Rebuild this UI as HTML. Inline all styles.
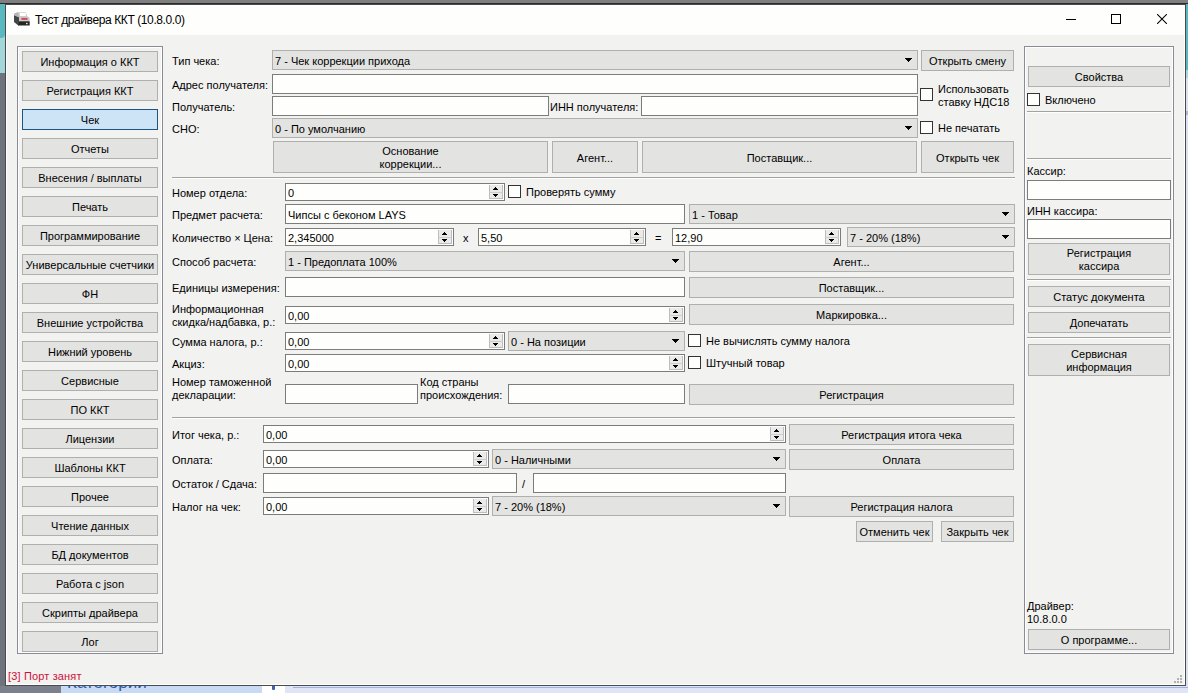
<!DOCTYPE html>
<html><head><meta charset="utf-8"><style>
*{margin:0;padding:0}
html,body{width:1188px;height:693px;overflow:hidden;background:#7b808c;position:relative}
body{font-family:"Liberation Sans",sans-serif;font-size:11px;color:#000;-webkit-text-stroke:0}
div,svg{position:absolute}
.lbl{white-space:pre;line-height:13px}
.btn{box-sizing:border-box;border:1px solid #afafad;background:#e3e3e1;display:flex;align-items:center;justify-content:center;text-align:center;line-height:13px}
.btn.sel{border-color:#1b5585;background:#cde4f6}
.btn span{display:block;white-space:pre;position:relative;top:1px}
.edit{box-sizing:border-box;border:1px solid #7c7c7a;background:#fefefc}
.edit span,.combo span{position:absolute;left:2px;line-height:13px;white-space:pre}
.combo{box-sizing:border-box;border:1px solid #afafad;background:#e3e3e1}
.combo i{position:absolute;right:6px;top:50%;margin-top:-2px;width:0;height:0;border-left:3.5px solid transparent;border-right:3.5px solid transparent;border-top:4px solid #000}
.chk{box-sizing:border-box;border:1px solid #333;background:#fefefc}
.hsep{box-sizing:border-box;border-top:1px solid #a2a2a0;border-bottom:1px solid #fefefc}
.grp{box-sizing:border-box;border:1px solid #8a8a98;box-shadow:inset 0 0 0 1px #fefefc}
.sp{width:13px;background:#f0f0f0}
.su,.sd{position:absolute;left:0;width:13px;box-sizing:border-box;border:1px solid #cfcfcf;background:#ececec}
.title{left:35px;top:13px;font-size:12px;line-height:15px;white-space:pre;letter-spacing:-0.4px;-webkit-text-stroke:0}
.ticon{left:14px;top:12px;width:16px;height:14px}
</style></head><body>
<div style="position:absolute;left:0;top:0;width:1188px;height:3px;background:#7f7f7f"></div>
<div style="position:absolute;left:0;top:3px;width:1188px;height:1px;background:#2b2b2b"></div>
<div style="position:absolute;left:0;top:4px;width:5px;height:682px;background:#6e737e"></div>
<div style="position:absolute;left:0;top:4px;width:5px;height:69px;background:#a3d6d9"></div>
<div style="position:absolute;left:0;top:4px;width:5px;height:34px;background:#5ab9bf;border-bottom-right-radius:4px"></div>
<div style="position:absolute;left:1186px;top:4px;width:2px;height:682px;background:#d9e1f2"></div>
<div style="position:absolute;left:1186px;top:4px;width:2px;height:66px;background:#5ab9bf"></div>
<div style="position:absolute;left:1186px;top:70px;width:2px;height:8px;background:#a9d8dc"></div>
<div style="position:absolute;left:1186px;top:111px;width:2px;height:4px;background:#aab8d6"></div>
<div style="position:absolute;left:5px;top:4px;width:1181px;height:682px;background:#4a4a4f"></div>
<div style="position:absolute;left:6px;top:5px;width:1179px;height:30px;background:#fefefc"></div>
<div style="position:absolute;left:6px;top:35px;width:1179px;height:650px;background:#fefefc"></div>
<div style="position:absolute;left:7px;top:35px;width:1177px;height:649px;background:#f2f2f0"></div>
<div style="position:absolute;left:0;top:686px;width:1188px;height:7px;background:#dfe5f6"></div>
<div style="position:absolute;left:0;top:686px;width:61px;height:7px;background:#7b808c"></div>
<div style="position:absolute;left:61px;top:686px;width:201px;height:7px;background:#c9daf4"></div>
<div style="position:absolute;left:262px;top:686px;width:23px;height:7px;background:#fff"></div>
<div style="position:absolute;left:272px;top:686px;width:3px;height:4px;background:#3a64b0;border-radius:0 0 1px 1px"></div>
<div style="position:absolute;left:293px;top:687px;width:895px;height:1px;background:#9fb4d8"></div>
<div style="position:absolute;left:67px;top:686px;height:7px;width:190px;overflow:hidden"><div style="position:absolute;left:0;top:-13px;font:17px 'Liberation Sans',sans-serif;color:#2c5aa8;line-height:19px;-webkit-text-stroke:0">Категории</div></div>
<svg style="position:absolute;left:14px;top:12px" width="16" height="14" viewBox="0 0 16 14"><path d="M0.3 1.5L4 0.3L11.5 0L13.5 4.5L15.6 5.5L15.7 9.3L5 9.3L0.3 5Z" fill="#cacaca"/><path d="M0 3L5 5.3V13.6H4.3L0 10Z" fill="#454545"/><path d="M5 9.3H15.7V13.6H4.3Z" fill="#252525"/><path d="M0.3 1.5L4 0.3L5 5.3L0.3 3.5Z" fill="#b4b4b4"/><rect x="5.8" y="0.8" width="6" height="3.2" fill="#fff"/><rect x="7.1" y="5.8" width="6.7" height="2.2" fill="#e48a96"/><rect x="7.6" y="6.3" width="5.6" height="1.2" fill="#c42a48"/><rect x="12" y="10.9" width="1.6" height="1.3" fill="#e8e8e8"/></svg>
<div class="title">Тест драйвера ККТ (10.8.0.0)</div>
<div style="position:absolute;left:1066px;top:19px;width:10px;height:1px;background:#000"></div>
<div style="position:absolute;left:1111px;top:14px;width:10px;height:10px;border:1px solid #000;box-sizing:border-box"></div>
<svg style="position:absolute;left:1157px;top:14px" width="10" height="10" viewBox="0 0 10 10"><path d="M0 0L10 10M10 0L0 10" stroke="#000" stroke-width="1.05"/></svg>
<div class="grp" style="left:17px;top:46px;width:146px;height:608px;"></div>
<div class="btn" style="left:22px;top:51px;width:136px;height:21px"><span>Информация о ККТ</span></div>
<div class="btn" style="left:22px;top:80px;width:136px;height:21px"><span>Регистрация ККТ</span></div>
<div class="btn sel" style="left:22px;top:109px;width:136px;height:21px"><span>Чек</span></div>
<div class="btn" style="left:22px;top:138px;width:136px;height:21px"><span>Отчеты</span></div>
<div class="btn" style="left:22px;top:167px;width:136px;height:21px"><span>Внесения / выплаты</span></div>
<div class="btn" style="left:22px;top:196px;width:136px;height:21px"><span>Печать</span></div>
<div class="btn" style="left:22px;top:225px;width:136px;height:21px"><span>Программирование</span></div>
<div class="btn" style="left:22px;top:254px;width:136px;height:21px"><span>Универсальные счетчики</span></div>
<div class="btn" style="left:22px;top:283px;width:136px;height:21px"><span>ФН</span></div>
<div class="btn" style="left:22px;top:312px;width:136px;height:21px"><span>Внешние устройства</span></div>
<div class="btn" style="left:22px;top:341px;width:136px;height:21px"><span>Нижний уровень</span></div>
<div class="btn" style="left:22px;top:370px;width:136px;height:21px"><span>Сервисные</span></div>
<div class="btn" style="left:22px;top:399px;width:136px;height:21px"><span>ПО ККТ</span></div>
<div class="btn" style="left:22px;top:428px;width:136px;height:21px"><span>Лицензии</span></div>
<div class="btn" style="left:22px;top:457px;width:136px;height:21px"><span>Шаблоны ККТ</span></div>
<div class="btn" style="left:22px;top:486px;width:136px;height:21px"><span>Прочее</span></div>
<div class="btn" style="left:22px;top:515px;width:136px;height:21px"><span>Чтение данных</span></div>
<div class="btn" style="left:22px;top:544px;width:136px;height:21px"><span>БД документов</span></div>
<div class="btn" style="left:22px;top:573px;width:136px;height:21px"><span>Работа с json</span></div>
<div class="btn" style="left:22px;top:602px;width:136px;height:21px"><span>Скрипты драйвера</span></div>
<div class="btn" style="left:22px;top:631px;width:136px;height:21px"><span>Лог</span></div>
<div class="lbl" style="left:172px;top:55px;">Тип чека:</div>
<div class="combo" style="left:272px;top:50px;width:646px;height:20px"><span style="top:4px">7 - Чек коррекции прихода</span><svg style="right:5px;top:7px" width="7" height="4"><path d="M0 0h7v1h-1v1h-1v1h-1v1h-1v-1h-1v-1h-1v-1h-1z"/></svg></div>
<div class="btn" style="left:921px;top:50px;width:93px;height:21px"><span>Открыть смену</span></div>
<div class="lbl" style="left:172px;top:79px;">Адрес получателя:</div>
<div class="edit" style="left:272px;top:74px;width:646px;height:20px"><span style="top:4px"></span></div>
<div class="chk" style="left:920px;top:88px;width:13px;height:13px;"></div>
<div class="lbl" style="left:938px;top:83px;">Использовать<br>ставку НДС18</div>
<div class="lbl" style="left:172px;top:101px;">Получатель:</div>
<div class="edit" style="left:272px;top:96px;width:277px;height:20px"><span style="top:4px"></span></div>
<div class="lbl" style="left:550px;top:101px;">ИНН получателя:</div>
<div class="edit" style="left:641px;top:96px;width:277px;height:20px"><span style="top:4px"></span></div>
<div class="lbl" style="left:172px;top:123px;">СНО:</div>
<div class="combo" style="left:272px;top:118px;width:646px;height:20px"><span style="top:4px">0 - По умолчанию</span><svg style="right:5px;top:7px" width="7" height="4"><path d="M0 0h7v1h-1v1h-1v1h-1v1h-1v-1h-1v-1h-1v-1h-1z"/></svg></div>
<div class="chk" style="left:920px;top:121px;width:13px;height:13px;"></div>
<div class="lbl" style="left:938px;top:122px;">Не печатать</div>
<div class="btn" style="left:273px;top:141px;width:275px;height:32px"><span>Основание<br>коррекции...</span></div>
<div class="btn" style="left:552px;top:141px;width:86px;height:32px"><span>Агент...</span></div>
<div class="btn" style="left:642px;top:141px;width:275px;height:32px"><span>Поставщик...</span></div>
<div class="btn" style="left:921px;top:141px;width:93px;height:32px"><span>Открыть чек</span></div>
<div class="hsep" style="left:172px;top:177px;width:843px;height:2px;"></div>
<div class="lbl" style="left:172px;top:187px;">Номер отдела:</div>
<div class="edit" style="left:285px;top:183px;width:220px;height:18px"><span style="top:3px">0</span><svg style="position:absolute;right:1px;top:1px" width="14" height="14" viewBox="0 0 14 14"><rect x="0" y="0" width="14" height="14" fill="#bdbdbd"/><rect x="1" y="0" width="12" height="13" fill="#eaeaea"/><line x1="0.5" y1="7.5" x2="13.5" y2="7.5" stroke="#cdcdcd"/><path d="M6 2h1v1h1v1h1v1H4V4h1V3h1z" fill="#000"/><path d="M4 9h5v1H8v1H7v1H6v-1H5v-1H4z" fill="#000"/></svg></div>
<div class="chk" style="left:508px;top:185px;width:13px;height:13px;"></div>
<div class="lbl" style="left:526px;top:186px;">Проверять сумму</div>
<div class="lbl" style="left:172px;top:209px;">Предмет расчета:</div>
<div class="edit" style="left:285px;top:204px;width:400px;height:20px"><span style="top:4px">Чипсы с беконом LAYS</span></div>
<div class="combo" style="left:689px;top:204px;width:326px;height:20px"><span style="top:4px">1 - Товар</span><svg style="right:5px;top:7px" width="7" height="4"><path d="M0 0h7v1h-1v1h-1v1h-1v1h-1v-1h-1v-1h-1v-1h-1z"/></svg></div>
<div class="lbl" style="left:172px;top:232px;">Количество × Цена:</div>
<div class="edit" style="left:285px;top:228px;width:169px;height:18px"><span style="top:3px">2,345000</span><svg style="position:absolute;right:1px;top:1px" width="14" height="14" viewBox="0 0 14 14"><rect x="0" y="0" width="14" height="14" fill="#bdbdbd"/><rect x="1" y="0" width="12" height="13" fill="#eaeaea"/><line x1="0.5" y1="7.5" x2="13.5" y2="7.5" stroke="#cdcdcd"/><path d="M6 2h1v1h1v1h1v1H4V4h1V3h1z" fill="#000"/><path d="M4 9h5v1H8v1H7v1H6v-1H5v-1H4z" fill="#000"/></svg></div>
<div class="lbl" style="left:463px;top:232px;">x</div>
<div class="edit" style="left:478px;top:228px;width:168px;height:18px"><span style="top:3px">5,50</span><svg style="position:absolute;right:1px;top:1px" width="14" height="14" viewBox="0 0 14 14"><rect x="0" y="0" width="14" height="14" fill="#bdbdbd"/><rect x="1" y="0" width="12" height="13" fill="#eaeaea"/><line x1="0.5" y1="7.5" x2="13.5" y2="7.5" stroke="#cdcdcd"/><path d="M6 2h1v1h1v1h1v1H4V4h1V3h1z" fill="#000"/><path d="M4 9h5v1H8v1H7v1H6v-1H5v-1H4z" fill="#000"/></svg></div>
<div class="lbl" style="left:655px;top:232px;">=</div>
<div class="edit" style="left:672px;top:228px;width:169px;height:18px"><span style="top:3px">12,90</span><svg style="position:absolute;right:1px;top:1px" width="14" height="14" viewBox="0 0 14 14"><rect x="0" y="0" width="14" height="14" fill="#bdbdbd"/><rect x="1" y="0" width="12" height="13" fill="#eaeaea"/><line x1="0.5" y1="7.5" x2="13.5" y2="7.5" stroke="#cdcdcd"/><path d="M6 2h1v1h1v1h1v1H4V4h1V3h1z" fill="#000"/><path d="M4 9h5v1H8v1H7v1H6v-1H5v-1H4z" fill="#000"/></svg></div>
<div class="combo" style="left:847px;top:227px;width:168px;height:20px"><span style="top:4px">7 - 20% (18%)</span><svg style="right:5px;top:7px" width="7" height="4"><path d="M0 0h7v1h-1v1h-1v1h-1v1h-1v-1h-1v-1h-1v-1h-1z"/></svg></div>
<div class="lbl" style="left:172px;top:256px;">Способ расчета:</div>
<div class="combo" style="left:285px;top:251px;width:400px;height:20px"><span style="top:4px">1 - Предоплата 100%</span><svg style="right:5px;top:7px" width="7" height="4"><path d="M0 0h7v1h-1v1h-1v1h-1v1h-1v-1h-1v-1h-1v-1h-1z"/></svg></div>
<div class="btn" style="left:689px;top:251px;width:325px;height:21px"><span>Агент...</span></div>
<div class="lbl" style="left:172px;top:282px;">Единицы измерения:</div>
<div class="edit" style="left:285px;top:277px;width:400px;height:20px"><span style="top:4px"></span></div>
<div class="btn" style="left:689px;top:277px;width:325px;height:21px"><span>Поставщик...</span></div>
<div class="lbl" style="left:172px;top:303px;">Информационная<br>скидка/надбавка, р.:</div>
<div class="edit" style="left:285px;top:306px;width:400px;height:18px"><span style="top:3px">0,00</span><svg style="position:absolute;right:1px;top:1px" width="14" height="14" viewBox="0 0 14 14"><rect x="0" y="0" width="14" height="14" fill="#bdbdbd"/><rect x="1" y="0" width="12" height="13" fill="#eaeaea"/><line x1="0.5" y1="7.5" x2="13.5" y2="7.5" stroke="#cdcdcd"/><path d="M6 2h1v1h1v1h1v1H4V4h1V3h1z" fill="#000"/><path d="M4 9h5v1H8v1H7v1H6v-1H5v-1H4z" fill="#000"/></svg></div>
<div class="btn" style="left:689px;top:304px;width:325px;height:21px"><span>Маркировка...</span></div>
<div class="lbl" style="left:172px;top:336px;">Сумма налога, р.:</div>
<div class="edit" style="left:285px;top:332px;width:220px;height:18px"><span style="top:3px">0,00</span><svg style="position:absolute;right:1px;top:1px" width="14" height="14" viewBox="0 0 14 14"><rect x="0" y="0" width="14" height="14" fill="#bdbdbd"/><rect x="1" y="0" width="12" height="13" fill="#eaeaea"/><line x1="0.5" y1="7.5" x2="13.5" y2="7.5" stroke="#cdcdcd"/><path d="M6 2h1v1h1v1h1v1H4V4h1V3h1z" fill="#000"/><path d="M4 9h5v1H8v1H7v1H6v-1H5v-1H4z" fill="#000"/></svg></div>
<div class="combo" style="left:508px;top:331px;width:177px;height:20px"><span style="top:4px">0 - На позиции</span><svg style="right:5px;top:7px" width="7" height="4"><path d="M0 0h7v1h-1v1h-1v1h-1v1h-1v-1h-1v-1h-1v-1h-1z"/></svg></div>
<div class="chk" style="left:688px;top:334px;width:13px;height:13px;"></div>
<div class="lbl" style="left:706px;top:335px;">Не вычислять сумму налога</div>
<div class="lbl" style="left:172px;top:358px;">Акциз:</div>
<div class="edit" style="left:285px;top:354px;width:400px;height:18px"><span style="top:3px">0,00</span><svg style="position:absolute;right:1px;top:1px" width="14" height="14" viewBox="0 0 14 14"><rect x="0" y="0" width="14" height="14" fill="#bdbdbd"/><rect x="1" y="0" width="12" height="13" fill="#eaeaea"/><line x1="0.5" y1="7.5" x2="13.5" y2="7.5" stroke="#cdcdcd"/><path d="M6 2h1v1h1v1h1v1H4V4h1V3h1z" fill="#000"/><path d="M4 9h5v1H8v1H7v1H6v-1H5v-1H4z" fill="#000"/></svg></div>
<div class="chk" style="left:688px;top:356px;width:13px;height:13px;"></div>
<div class="lbl" style="left:706px;top:357px;">Штучный товар</div>
<div class="lbl" style="left:172px;top:376px;">Номер таможенной<br>декларации:</div>
<div class="edit" style="left:285px;top:384px;width:133px;height:20px"><span style="top:4px"></span></div>
<div class="lbl" style="left:420px;top:376px;">Код страны<br>происхождения:</div>
<div class="edit" style="left:508px;top:384px;width:177px;height:20px"><span style="top:4px"></span></div>
<div class="btn" style="left:689px;top:384px;width:325px;height:21px"><span>Регистрация</span></div>
<div class="hsep" style="left:172px;top:417px;width:843px;height:2px;"></div>
<div class="lbl" style="left:172px;top:429px;">Итог чека, р.:</div>
<div class="edit" style="left:263px;top:425px;width:523px;height:18px"><span style="top:3px">0,00</span><svg style="position:absolute;right:1px;top:1px" width="14" height="14" viewBox="0 0 14 14"><rect x="0" y="0" width="14" height="14" fill="#bdbdbd"/><rect x="1" y="0" width="12" height="13" fill="#eaeaea"/><line x1="0.5" y1="7.5" x2="13.5" y2="7.5" stroke="#cdcdcd"/><path d="M6 2h1v1h1v1h1v1H4V4h1V3h1z" fill="#000"/><path d="M4 9h5v1H8v1H7v1H6v-1H5v-1H4z" fill="#000"/></svg></div>
<div class="btn" style="left:789px;top:424px;width:225px;height:21px"><span>Регистрация итога чека</span></div>
<div class="lbl" style="left:172px;top:454px;">Оплата:</div>
<div class="edit" style="left:263px;top:450px;width:226px;height:18px"><span style="top:3px">0,00</span><svg style="position:absolute;right:1px;top:1px" width="14" height="14" viewBox="0 0 14 14"><rect x="0" y="0" width="14" height="14" fill="#bdbdbd"/><rect x="1" y="0" width="12" height="13" fill="#eaeaea"/><line x1="0.5" y1="7.5" x2="13.5" y2="7.5" stroke="#cdcdcd"/><path d="M6 2h1v1h1v1h1v1H4V4h1V3h1z" fill="#000"/><path d="M4 9h5v1H8v1H7v1H6v-1H5v-1H4z" fill="#000"/></svg></div>
<div class="combo" style="left:492px;top:449px;width:294px;height:20px"><span style="top:4px">0 - Наличными</span><svg style="right:5px;top:7px" width="7" height="4"><path d="M0 0h7v1h-1v1h-1v1h-1v1h-1v-1h-1v-1h-1v-1h-1z"/></svg></div>
<div class="btn" style="left:789px;top:449px;width:225px;height:21px"><span>Оплата</span></div>
<div class="lbl" style="left:172px;top:478px;">Остаток / Сдача:</div>
<div class="edit" style="left:263px;top:473px;width:254px;height:20px"><span style="top:4px"></span></div>
<div class="lbl" style="left:522px;top:478px;">/</div>
<div class="edit" style="left:533px;top:473px;width:253px;height:20px"><span style="top:4px"></span></div>
<div class="lbl" style="left:172px;top:501px;">Налог на чек:</div>
<div class="edit" style="left:263px;top:497px;width:226px;height:18px"><span style="top:3px">0,00</span><svg style="position:absolute;right:1px;top:1px" width="14" height="14" viewBox="0 0 14 14"><rect x="0" y="0" width="14" height="14" fill="#bdbdbd"/><rect x="1" y="0" width="12" height="13" fill="#eaeaea"/><line x1="0.5" y1="7.5" x2="13.5" y2="7.5" stroke="#cdcdcd"/><path d="M6 2h1v1h1v1h1v1H4V4h1V3h1z" fill="#000"/><path d="M4 9h5v1H8v1H7v1H6v-1H5v-1H4z" fill="#000"/></svg></div>
<div class="combo" style="left:492px;top:496px;width:294px;height:20px"><span style="top:4px">7 - 20% (18%)</span><svg style="right:5px;top:7px" width="7" height="4"><path d="M0 0h7v1h-1v1h-1v1h-1v1h-1v-1h-1v-1h-1v-1h-1z"/></svg></div>
<div class="btn" style="left:789px;top:496px;width:225px;height:21px"><span>Регистрация налога</span></div>
<div class="btn" style="left:856px;top:521px;width:77px;height:21px"><span>Отменить чек</span></div>
<div class="btn" style="left:941px;top:521px;width:73px;height:21px"><span>Закрыть чек</span></div>
<div class="grp" style="left:1024px;top:46px;width:150px;height:608px;"></div>
<div class="btn" style="left:1028px;top:66px;width:142px;height:21px"><span>Свойства</span></div>
<div class="chk" style="left:1027px;top:93px;width:13px;height:13px;"></div>
<div class="lbl" style="left:1045px;top:94px;">Включено</div>
<div class="hsep" style="left:1027px;top:111px;width:144px;height:2px;"></div>
<div class="hsep" style="left:1027px;top:158px;width:144px;height:2px;"></div>
<div class="lbl" style="left:1027px;top:165px;">Кассир:</div>
<div class="edit" style="left:1027px;top:180px;width:144px;height:20px"><span style="top:4px"></span></div>
<div class="lbl" style="left:1027px;top:205px;">ИНН кассира:</div>
<div class="edit" style="left:1027px;top:219px;width:144px;height:20px"><span style="top:4px"></span></div>
<div class="btn" style="left:1028px;top:243px;width:142px;height:32px"><span>Регистрация<br>кассира</span></div>
<div class="hsep" style="left:1027px;top:279px;width:144px;height:2px;"></div>
<div class="btn" style="left:1028px;top:286px;width:142px;height:21px"><span>Статус документа</span></div>
<div class="btn" style="left:1028px;top:312px;width:142px;height:21px"><span>Допечатать</span></div>
<div class="hsep" style="left:1027px;top:337px;width:144px;height:2px;"></div>
<div class="btn" style="left:1028px;top:344px;width:142px;height:32px"><span>Сервисная<br>информация</span></div>
<div class="lbl" style="left:1027px;top:600px;">Драйвер:<br>10.8.0.0</div>
<div class="btn" style="left:1028px;top:629px;width:142px;height:21px"><span>О программе...</span></div>
<div class="lbl" style="left:8px;top:670px;color:#d0103a;letter-spacing:0.15px">[3] Порт занят</div>
<div style="position:absolute;left:1180px;top:675px;width:2px;height:2px;background:#b0b0b0"></div>
<div style="position:absolute;left:1177px;top:678px;width:2px;height:2px;background:#b0b0b0"></div>
<div style="position:absolute;left:1180px;top:678px;width:2px;height:2px;background:#b0b0b0"></div>
<div style="position:absolute;left:1174px;top:681px;width:2px;height:2px;background:#b0b0b0"></div>
<div style="position:absolute;left:1177px;top:681px;width:2px;height:2px;background:#b0b0b0"></div>
<div style="position:absolute;left:1180px;top:681px;width:2px;height:2px;background:#b0b0b0"></div>
</body></html>
